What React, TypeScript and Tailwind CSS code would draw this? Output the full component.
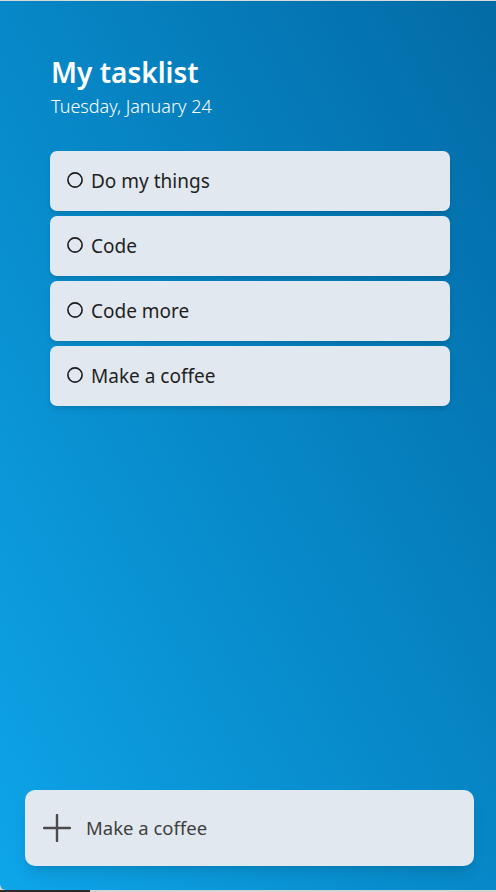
const tasks = ["Do my things", "Code", "Code more", "Make a coffee"];

// Task list widget: header, stacked task cards, and an "add task" box pinned to the bottom.
export default function App() {
  return (
    <div
      className="flex h-[892px] w-full flex-col bg-[#d4d4d4]"
      style={{ fontFamily: '"Noto Sans", "Open Sans", sans-serif' }}
    >
      <div className="h-px bg-[#d9d9d9]" />
      <div className="flex flex-1 flex-col rounded-bl-[6px] bg-gradient-to-tr from-[#0ea5e9] to-[#036ba6]">
        <header className="px-[51px] pt-[52px]">
          <h1 className="text-[28px] font-semibold leading-[38px] text-white">My tasklist</h1>
          <p className="mt-[2px] text-[18px] font-light leading-[26px] text-white">
            Tuesday, January 24
          </p>
        </header>

        <ul className="mt-[32px] flex flex-col gap-[5px] px-[50px] pr-[46px]">
          {tasks.map((t) => (
            <li
              key={t}
              className="flex h-[60px] items-center gap-[8px] rounded-[7px] bg-[#e2e8f0] pl-[17px] shadow-md"
            >
              <svg viewBox="0 0 16 16" className="mb-[3px] h-[16px] w-[16px]">
                <circle cx="8" cy="8" r="7.1" fill="none" stroke="#1a1a1a" strokeWidth="1.6" />
              </svg>
              <span className="text-[19px] text-[#1f1f1f]">{t}</span>
            </li>
          ))}
        </ul>

        <div className="flex-1" />

        <div className="mb-[24px] ml-[25px] mr-[22px] flex h-[76px] items-center gap-[15px] rounded-[10px] bg-[#e2e8f0] pl-[18px] shadow-lg">
          <svg viewBox="0 0 28 28" className="h-[28px] w-[28px]">
            <path d="M14 1v26M1 14h26" stroke="#4b4b4b" strokeWidth="2.4" strokeLinecap="round" />
          </svg>
          <span className="text-[18.5px] text-[#3f3f3f]">Make a coffee</span>
        </div>
      </div>
      <div className="flex h-[2px]">
        <div className="w-[90px] bg-[#2a2a2a]" />
        <div className="flex-1 bg-[#d4d4d4]" />
      </div>
    </div>
  );
}
